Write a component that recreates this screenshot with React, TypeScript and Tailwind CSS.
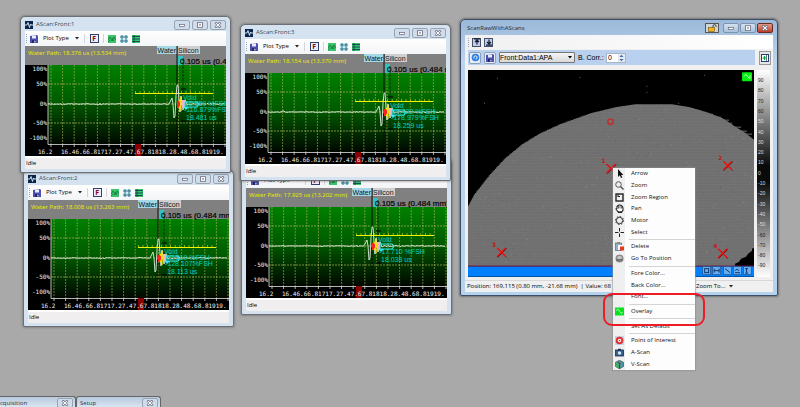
import React from "react";

const UI = "font-['Open_Sans','Noto_Sans',sans-serif]";

type Scan = {
  id: number;
  path: string;
  echo: number;
  lines: string[];
  place: string;
};

const scans: Scan[] = [
  { id: 4, path: "17.925 us (13.202 mm)", echo: 126, lines: ["Void", "", "-17.710 %FSH", "18.038 us"], place: "left-[241px] top-[158px] z-0" },
  { id: 2, path: "18.008 us (13.263 mm)", echo: 130, lines: ["Void", "52.519 %FSH", "-128.107%FSH", "18.113 us"], place: "left-[23px] top-[170px] z-0" },
  { id: 3, path: "18.154 us (13.370 mm)", echo: 139, lines: ["Void", "59.422 %FSH", "-178.979%FSH", "18.259 us"], place: "left-[240px] top-[24px] z-10" },
  { id: 1, path: "18.376 us (13.534 mm)", echo: 152, lines: ["Void", "52.859 %FSH", "-116.879%FSH", "18.481 us"], place: "left-[20px] top-[16px] z-10" },
];

function noise(seed: number) {
  let s = seed;
  return () => {
    s = (s * 16807) % 2147483647;
    return s / 2147483647;
  };
}

function CaptionButton({ kind, active }: { kind: "min" | "max" | "close"; active?: boolean }) {
  const red = active && kind === "close";
  return (
    <button
      aria-label={kind}
      className={`flex h-[10px] w-4 items-center justify-center rounded-[2px] border ${
        red ? "border-[#6b2a22] bg-linear-to-b from-[#e09a8c] to-[#c23a22]" : active ? "border-[#7e93ad] bg-linear-to-b from-[#d3e0ef] to-[#a9c2de]" : "border-[#9aa4b1] bg-[#cfdceb]"
      }`}
    >
      <svg width="8" height="6" viewBox="0 0 8 6" fill="none">
        {kind === "min" && <rect x="1.5" y="2.5" width="5" height="2" fill="#fff" stroke="#667" strokeWidth="0.7" />}
        {kind === "max" && (
          <>
            <rect x="1.5" y="0.7" width="5" height="4.6" fill="#fff" stroke="#667" strokeWidth="0.8" />
            <rect x="3.2" y="2.2" width="1.6" height="1.4" fill="#778" />
          </>
        )}
        {kind === "close" && (
          <>
            <path d="M1.5 .5 6.5 5.5M6.5 .5 1.5 5.5" stroke="#556" strokeWidth="2.4" />
            <path d="M1.8 .8 6.2 5.2M6.2 .8 1.8 5.2" stroke="#fff" strokeWidth="1.2" />
          </>
        )}
      </svg>
    </button>
  );
}

function Floppy() {
  return (
    <svg width="8" height="8" viewBox="0 0 8 8">
      <path d="M0 1 7 0 8 1V8H0Z" fill="#4a4fb0" />
      <rect x="2" y="0.5" width="4" height="3" fill="#e9ecfb" />
      <rect x="2" y="5" width="4" height="3" fill="#23266b" />
      <rect x="4.3" y="5.6" width="1.2" height="2" fill="#e9ecfb" />
    </svg>
  );
}

function Grip() {
  return <span className="h-[9px] w-px border-l border-dotted border-gray-400" />;
}

const gridX = Array.from({ length: 16 }, (_, i) => 26 + i * 11.6);

function trace(echo: number, seed: number) {
  const r = noise(seed * 7919);
  let d = "M23 58";
  for (let x = 24; x < echo - 7; x += 1) d += `L${x} ${(58 + (r() - 0.5) * (x % 37 < 3 ? 2.4 : 0.7)).toFixed(1)}`;
  d += `L${echo - 6} 54 L${echo - 5} 52 L${echo - 4} 58 L${echo - 3} 72 L${echo - 2} 70 L${echo - 1} 50 L${echo} 39 L${echo + 1} 39 L${echo + 2} 54 L${echo + 3} 66 L${echo + 4} 50 L${echo + 6} 64 L${echo + 8} 54 L${echo + 10} 59`;
  for (let x = echo + 12; x < 200; x += 1) d += `L${x} ${(58 + (r() - 0.5) * 1.2).toFixed(1)}`;
  return d;
}

function Plot({ scan }: { scan: Scan }) {
  const e = scan.echo;
  return (
    <svg viewBox="0 0 201 110" className="block h-[110px] w-full bg-black" fontFamily="'Liberation Sans', sans-serif">
      <defs>
        <linearGradient id={`field${scan.id}`} x1="0" y1="0" x2="0" y2="1">
          <stop offset="0" stopColor="#008000" />
          <stop offset="0.45" stopColor="#005c00" />
          <stop offset="1" stopColor="#000800" />
        </linearGradient>
      </defs>
      <rect width="201" height="19" fill="#808080" />
      <rect x="23" y="19" width="178" height="79" fill={`url(#field${scan.id})`} />
      {gridX.map((x) => (
        <line key={x} x1={x} x2={x} y1="19" y2="98" stroke="#b3b85c" strokeWidth="0.9" strokeDasharray="2 1" opacity="0.65" />
      ))}
      {[38, 58, 77].map((y) => (
        <line key={y} x1="23" x2="201" y1={y} y2={y} stroke="#b3b85c" strokeWidth="0.9" strokeDasharray="2 1" opacity="0.75" />
      ))}
      <path d="M23 19V98.5H201" fill="none" stroke="#c8c8c8" strokeWidth="0.9" />
      {gridX.map((x) => (
        <line key={x} x1={x} x2={x} y1="98" y2="101" stroke="#ddd" strokeWidth="0.8" />
      ))}
      <g fill="#f2f2f2" fontFamily="'DejaVu Sans Mono', monospace" fontSize="6" textAnchor="end">
        <text x="22" y="25">100%</text>
        <text x="22" y="40">50%</text>
        <text x="22" y="60">0%</text>
        <text x="22" y="79">-50%</text>
        <text x="22" y="94">-100%</text>
      </g>
      <rect x="110" y="98" width="6" height="12" fill="#8b0000" />
      <g fill="#f2f2f2" fontFamily="'DejaVu Sans Mono', monospace" fontSize="6">
        <text x="13" y="108">16.2</text>
        <text x="36" y="108">16.46.66.81717.27.47.67.81818.28.48.68.81919.</text>
      </g>
      <text x="3" y="9" fontSize="6" fontFamily="'Noto Sans', sans-serif" fill="#e6e600">Water Path: {scan.path}</text>
      <rect x={e - 20} y="0" width="20" height="8" fill="#a5d8e6" />
      <rect x={e + 1} y="0" width="22" height="8" fill="#cfcfcf" />
      <text x={e - 1} y="7" fontSize="7" fill="#111" textAnchor="end">Water</text>
      <text x={e + 1} y="7" fontSize="7" fill="#111">Silicon</text>
      <rect x={e + 1} y="10" width="5" height="9" fill="#2fc4c4" />
      <text x={e + 3} y="18" fontSize="8" fill="#000" stroke="#000" strokeWidth="0.2">0.105 us (0.484 mm)</text>
      <line x1={e} x2={e} y1="0" y2="50" stroke="#000" strokeWidth="0.9" />
      <line x1={e} x2={e} y1="60" y2="98" stroke="#000" strokeWidth="0.9" strokeDasharray="2 1.5" />
      <line x1={e + 6} x2={e + 6} y1="12" y2="76" stroke="#0a2a0a" strokeWidth="0.9" strokeDasharray="3 1" />
      <path d={`M${e + 4} 43h5M${e + 4} 75h5`} stroke="#000" strokeWidth="1" />
      <line x1="110" x2="188" y1="47.5" y2="47.5" stroke="#f4f400" strokeWidth="1.2" />
      <line x1="110" x2="188" y1="46" y2="46" stroke="#e0e000" strokeWidth="1.6" strokeDasharray="0.8 3.8" />
      <path d={trace(e, scan.id)} fill="none" stroke="#e4ece4" strokeWidth="0.9" />
      <rect x={e} y="55" width="3" height="7" fill="#ff2020" />
      <path d={`M${e + 4} 51v14M${e + 2} 54l3 4-3 4`} stroke="#ffe000" strokeWidth="1.3" fill="none" />
      <rect x={e + 5} y="54" width="3" height="8" fill="#f3b6c0" />
      <g fill="#00cfc4" fontSize="7">
        <text x={e + 6} y="54">{scan.lines[0]}</text>
        <text x={e + 8} y="60">{scan.lines[1]}</text>
        <text x={e + 7} y="66">{scan.lines[2]}</text>
        <text x={e + 9} y="74">{scan.lines[3]}</text>
      </g>
      <path d={`M${e + 8} 56h12l2 2-2 3h-12z`} fill="none" stroke="#35e8ef" strokeWidth="1.1" />
      <path d={`M${e + 6} 61l3 3 3-3z`} fill="#35e8ef" />
    </svg>
  );
}

function ToolIcon({ kind }: { kind: "wave" | "grid" | "rows" }) {
  return (
    <svg width="8" height="8" viewBox="0 0 8 8">
      {kind === "wave" && (
        <>
          <rect width="8" height="8" fill="#3cc46a" />
          <path d="M0 5l2-3 2 4 2-4 2 3M0 7l2-2M4 3l2 3" stroke="#0b6a34" fill="none" strokeWidth="0.7" />
        </>
      )}
      {kind === "grid" && (
        <>
          <rect width="8" height="8" fill="#c8f2f8" />
          <path d="M2 0V8M6 0V8M0 2H8M0 6H8" stroke="#16506a" strokeWidth="0.8" />
        </>
      )}
      {kind === "rows" && (
        <>
          <rect width="8" height="8" fill="#3cc46a" />
          <path d="M0 1.5H8M0 4H8M0 6.5H8M2 0V8" stroke="#0b4a54" strokeWidth="0.9" />
        </>
      )}
    </svg>
  );
}

function AScanWindow({ scan }: { scan: Scan }) {
  return (
    <section className={`absolute flex w-[211px] flex-col rounded-t-[5px] rounded-b-[2px] border border-[#6c7076] bg-[#d5e3f1] px-1 pb-[3px] shadow-[0_0_2px_1px_rgba(70,70,70,0.35)] ${scan.place}`}>
      <header className="flex h-[14px] items-center gap-[3px] pt-px">
        <svg width="8" height="8" viewBox="0 0 8 8">
          <rect width="8" height="8" fill="#0a2348" />
          <path d="M0 4H2L3 1.5 4.5 6.5 5.5 3 6 4H8" fill="none" stroke="#dff0ff" strokeWidth="0.9" />
        </svg>
        <h2 className="flex-1 text-[6px] leading-[9px] text-[#3c4650]">AScan:Front:{scan.id}</h2>
        <div className="flex gap-[2px]">
          <CaptionButton kind="min" />
          <CaptionButton kind="max" />
          <CaptionButton kind="close" />
        </div>
      </header>
      <div className="flex h-[15px] items-center bg-linear-to-b from-white to-[#f3f4f6] pl-px">
        <Grip />
        <button aria-label="Save" className="ml-[3px]"><Floppy /></button>
        <button className="ml-[5px] flex items-center gap-[6px] text-[6px] leading-[9px] text-black">
          Plot Type
          <svg width="4" height="3" viewBox="0 0 4 3"><path d="M0 0H4L2 2.5Z" fill="#222" /></svg>
        </button>
        <span className="mx-[5px] h-[9px] w-px bg-gray-300" />
        <button className="flex h-[9px] w-[9px] items-center justify-center border border-[#33406e] bg-[#eceff8] text-[7px] leading-[7px] font-bold text-[#8b0015]">F</button>
        <span className="mx-[4px] h-[9px] w-px bg-gray-300" />
        <div className="flex gap-[4px]">
          <button aria-label="Waveform"><ToolIcon kind="wave" /></button>
          <button aria-label="Grid"><ToolIcon kind="grid" /></button>
          <button aria-label="Rows"><ToolIcon kind="rows" /></button>
        </div>
      </div>
      <Plot scan={scan} />
      <footer className="flex h-[13px] items-center border-t-2 border-white bg-[#f0eeee] pl-px text-[6px] leading-[9px] text-black">Idle</footer>
    </section>
  );
}

const rnd = noise(4242);
const specks = Array.from({ length: 700 }, () => ({ x: rnd() * 287, y: rnd() * 196, v: rnd() }));
const edge = [
  [0, 136], [7, 123], [22, 104], [37, 88], [54, 74], [72, 63], [94, 53], [122, 43], [147, 37], [167, 34], [204, 34], [222, 37], [239, 42], [255, 48], [267, 56], [277, 62], [287, 70],
];

function stairs() {
  let d = "M0 196V136";
  for (let i = 1; i < edge.length; i++) {
    const [x0, y0] = edge[i - 1];
    const [x1, y1] = edge[i];
    const n = 12;
    for (let k = 1; k <= n; k++) {
      d += `H${(x0 + ((x1 - x0) * k) / n).toFixed(1)}V${(y0 + ((y1 - y0) * k) / n).toFixed(1)}`;
    }
  }
  return d + "V178l-2 1v2l-4 3-2 3-5 2-2 3-4 2v2H0Z";
}

const marks = [
  { n: 1, x: 143, y: 98 },
  { n: 2, x: 260, y: 95 },
  { n: 3, x: 33, y: 182 },
  { n: 4, x: 255, y: 183 },
];

function ScanImage() {
  return (
    <svg viewBox="0 0 287 207" className="block h-[207px] min-w-0 flex-1 bg-black">
      <defs>
        <clipPath id="wafer"><path d={stairs()} /></clipPath>
      </defs>
      <path d={stairs()} fill="#707070" />
      <g clipPath="url(#wafer)">
        {Array.from({ length: 66 }, (_, i) => (
          <rect key={i} x="0" y={i * 3} width="287" height="1" fill="#7b7b7b" opacity="0.4" />
        ))}
        {specks.map((s, i) => (
          <rect key={i} x={s.x} y={s.y} width="1" height="1" fill={s.v > 0.5 ? "#979797" : "#5c5c5c"} opacity={s.v > 0.97 ? 1 : 0.5} />
        ))}
      </g>
      <path d="M240 47h14M246 50h16M252 53h13M262 57h12M266 61h14M272 64h13M236 44h10" stroke="#6f6f6f" strokeWidth="1" />
      <path d="M29 8h1M112 7h1M16 33h1M179 16h1M237 5h1M179 22h1M211 33h1" stroke="#666" strokeWidth="1" />
      <path d="M0 196.5H287" stroke="#a02060" strokeWidth="1" />
      <rect x="0" y="197" width="287" height="10" fill="#0080ff" />
      <circle cx="143" cy="51.5" r="2.7" fill="none" stroke="#d42020" strokeWidth="1.2" />
      {marks.map((m) => (
        <g key={m.n}>
          <path d={`M${m.x - 4} ${m.y - 4}l9 9M${m.x + 5} ${m.y - 4}l-9 9`} stroke="#400" strokeWidth="1" transform="translate(0.6 0.6)" />
          <path d={`M${m.x - 4} ${m.y - 4}l9 9M${m.x + 5} ${m.y - 4}l-9 9`} stroke="#f01010" strokeWidth="1.3" />
          <text x={m.x - 9} y={m.y - 5} fontSize="6" fontWeight="bold" fill="#c01818" fontFamily="'DejaVu Sans', sans-serif">{m.n}</text>
        </g>
      ))}
      <rect x="275" y="2" width="10" height="9" rx="1" fill="#00f010" />
      <path d="M277 6l2-2 2 3 2 1v-3" fill="none" stroke="#d6ffd6" strokeWidth="0.9" />
      {[235, 245, 256, 266, 276].map((x) => (
        <rect key={x} x={x + 0.5} y="197" width="8" height="8" fill="#66aef0" stroke="#23528c" strokeWidth="0.7" />
      ))}
      <g stroke="#0c2c5c" strokeWidth="0.9" fill="none">
        <rect x="237.5" y="199" width="4" height="4" />
        <path d="M247 199v4M252 199v4M247 201h5M258 199l5 4M268 201q2-3 4 0M268 203h5M278 199h3M278 203.5h3M279.5 199v4" />
      </g>
    </svg>
  );
}

const levels = ["90", "80", "70", "60", "50", "40", "30", "20", "10", "0", "-10", "-20", "-30", "-40", "-50", "-60", "-70", "-80", "-90"];

function ScanWindow() {
  return (
    <section className="absolute top-[19px] left-[460px] flex w-[318px] flex-col rounded-t-[5px] rounded-b-[2px] border border-[#3d4f66] bg-linear-to-b from-[#9cb9da] via-[#bcd3ec] via-15% to-[#b5d3ef] px-1 pb-[3px] shadow-[0_0_2px_1px_rgba(50,50,50,0.45)]">
      <header className="flex h-[15px] items-center pt-px pl-[2px]">
        <h2 className="flex-1 text-[6px] leading-[9px] text-[#1c2733]">ScanRawWithAScans</h2>
        <button aria-label="Unlock" className="mr-[4px] flex h-[10px] w-[14px] items-center justify-center border border-[#555] bg-[#cdd5dd]">
          <svg width="9" height="8" viewBox="0 0 9 8">
            <rect x="0.5" y="3.5" width="6" height="4" fill="#f3b41c" stroke="#7b5600" strokeWidth="0.6" />
            <path d="M5 3.5V2Q5 .6 6.5 .6T8 2V3" fill="none" stroke="#444" strokeWidth="1" />
          </svg>
        </button>
        <div className="flex gap-px">
          <CaptionButton kind="min" active />
          <CaptionButton kind="max" active />
          <CaptionButton kind="close" active />
        </div>
      </header>
      <div className="flex flex-col bg-[#f0f0f0]">
        <div className="flex h-[14px] items-center gap-[3px] bg-linear-to-r from-[#f0f0f0] to-white pl-[3px]">
          <Grip />
          {["M4 6.5V2M2 4l2-2 2 2M1 .8H7", "M4 1.5V6M2 4l2 2 2-2M1 7.2H7"].map((d) => (
            <button key={d} aria-label="Layout" className="flex h-[9px] w-[9px] items-center justify-center border border-[#45506c] bg-[#c5cbe0]">
              <svg width="8" height="8" viewBox="0 0 8 8" className="shrink-0"><path d={d} fill="none" stroke="#111a33" strokeWidth="1.2" /></svg>
            </button>
          ))}
        </div>
        <div className="flex h-[17px] items-center gap-[4px] pr-[2px] pl-[3px]">
          <div className="flex h-[15px] flex-1 items-center gap-[3px] bg-[#b9d0ee] pl-px">
            <button aria-label="Refresh" className="flex h-[12px] w-[12px] items-center justify-center rounded-[2px] border border-[#8ca0bb] bg-[#e8eef7]">
              <svg width="9" height="9" viewBox="0 0 9 9"><circle cx="4.5" cy="4.5" r="3.8" fill="#2c7de0" /><path d="M2.8 5.5Q2.5 2.8 4.5 2.8L5.8 3.5M6.2 3.5Q6.5 6.2 4.5 6.2" fill="none" stroke="#fff" strokeWidth="0.9" /></svg>
            </button>
            <button aria-label="Save data" className="flex h-[12px] w-[12px] items-center justify-center rounded-[2px] border border-[#8ca0bb] bg-[#e8eef7]"><Floppy /></button>
            <div className="relative">
              <select aria-label="Data source" className="block h-[11px] w-[76px] appearance-none rounded-[1px] border border-[#777] bg-linear-to-b from-[#f4f4f4] to-[#dadada] font-['Liberation_Sans',sans-serif] text-[7px] leading-[9px] text-black">
                <option>Front:Data1:APA</option>
              </select>
              <svg className="pointer-events-none absolute top-[4px] right-[3px]" width="4" height="3" viewBox="0 0 4 3"><path d="M0 0H4L2 2.5Z" fill="#000" /></svg>
            </div>
            <label htmlFor="corr" className="w-[25px] font-['Liberation_Sans',sans-serif] text-[7px] leading-[9px] whitespace-nowrap text-black">B. Corr.:</label>
            <div className="flex h-[10px] border border-[#a8b6c8] bg-white">
              <input id="corr" type="text" defaultValue="0" className="w-[11px] pl-px font-['Liberation_Sans',sans-serif] text-[7px] leading-[8px] text-black" />
              <svg width="7" height="8" viewBox="0 0 7 8"><rect width="7" height="8" fill="#e4e8f0" /><path d="M1.5 3 3.5 .8 5.5 3ZM1.5 5 3.5 7.2 5.5 5Z" fill="#4468a8" /></svg>
            </div>
          </div>
          <button aria-label="Add panel" className="flex h-[14px] w-[12px] items-center justify-center border border-[#999] bg-[#e6e6e6]">
            <svg width="8" height="8" viewBox="0 0 8 8"><rect x="0.5" y="0.5" width="7" height="7" fill="#fff" stroke="#24406e" /><path d="M5.5 1V7" stroke="#24406e" strokeWidth="0.7" /><path d="M3.5 2V6M1.5 4H5.5" stroke="#0f9a34" strokeWidth="1.2" /></svg>
          </button>
        </div>
        <div className="mt-[4px] flex gap-[3px] pr-[3px] pl-[3px]">
          <ScanImage />
          <svg viewBox="0 0 13 207" className="h-[207px] w-[13px]" fontFamily="'Liberation Sans', sans-serif" fontSize="5">
            <defs>
              <linearGradient id="scale" x1="0" y1="0" x2="0" y2="1">
                <stop offset="0" stopColor="#fff" />
                <stop offset="0.46" stopColor="#0a0a0a" />
                <stop offset="0.54" stopColor="#0a0a0a" />
                <stop offset="1" stopColor="#fff" />
              </linearGradient>
            </defs>
            <rect width="13" height="207" fill="url(#scale)" />
            {levels.map((t, i) => (
              <text key={t} x="1" y={12 + i * 10.3} fill={i < 4 || i > 14 ? "#222" : "#ddd"}>{t}</text>
            ))}
          </svg>
        </div>
        <footer className="mt-[3px] flex h-[12px] items-center border-t border-[#d8d8d8] pl-[2px] text-[6px] leading-[9px] text-black">
          <span className="w-[146px] whitespace-pre">Position: 169,115 (0.80 mm, -21.68 mm)  | Value: 68</span>
          <button className="ml-auto flex w-[77px] items-center gap-[4px]">
            Zoom To...
            <svg width="4" height="3" viewBox="0 0 4 3"><path d="M0 0H4L2 2.5Z" fill="#222" /></svg>
          </button>
        </footer>
      </div>
    </section>
  );
}

const glyphs: Record<string, React.ReactNode> = {
  Arrow: <path d="M3 0V8L4.8 6.3 6 9 7.3 8.4 6.1 5.9H8.3Z" fill="#111" />,
  Zoom: <g fill="none" stroke="#555"><circle cx="3.5" cy="3.5" r="2.8" /><path d="M5.5 5.5 8.5 8.5" strokeWidth="1.5" /></g>,
  "Zoom Region": <g fill="none" stroke="#222"><rect x="1" y="1" width="7" height="7" strokeWidth="1.4" /><path d="M3 1V4M3 3.5H5" /></g>,
  Pan: <g><path d="M1 5 2 4.5V2.5L3 1.5 4 1 5 1 6.3 1.5 7.5 2.5 8 4V6L6.5 8.5H3.5Z" fill="#fff" stroke="#222" strokeWidth="1.1" /><path d="M3.5 2V4.5M5 1.5V4.5M6.5 2.5V4.5M3 7.5H7" stroke="#222" strokeWidth="0.7" /></g>,
  Motor: <g fill="none" stroke="#333"><circle cx="4.5" cy="4.5" r="3.2" /><circle cx="4.5" cy="4.5" r="4" strokeDasharray="1.5 1.6" /></g>,
  Select: <path d="M4.5 0V3.5M4.5 5.5V9M0 4.5H3.5M5.5 4.5H9" stroke="#222" strokeWidth="1" />,
  Delete: <g><rect x="0.5" y="1" width="6" height="7.5" fill="#8fb0cc" stroke="#4f6c86" strokeWidth="0.7" /><rect x="2" y="0" width="3" height="1.5" fill="#c08040" /><rect x="3" y="3" width="4" height="5" fill="#fff" /><rect x="5" y="4.5" width="4" height="4" fill="#e8381c" /></g>,
  "Go To Position": <g><circle cx="4.5" cy="4.5" r="4" fill="#8a8a8a" /><ellipse cx="4.5" cy="3.5" rx="2.5" ry="1.5" fill="#c8c8c8" /><path d="M1 6H8" stroke="#555" strokeWidth="0.8" /></g>,
  Overlay: <g><rect width="9" height="8" y="0.5" fill="#08e020" /><path d="M1 4l2-2 2 3 1.5 1.5 1-1.5" stroke="#b8ffb8" fill="none" strokeWidth="0.8" /></g>,
  "Point of Interest": <g><rect width="9" height="9" fill="#c4d4e8" /><circle cx="4.5" cy="4.5" r="2.8" fill="#fff" stroke="#e03030" strokeWidth="2" /><circle cx="4.5" cy="4.5" r="0.8" fill="#e03030" /></g>,
  "A-Scan": <g><rect x="0.5" y="2" width="8" height="6" fill="#38608e" stroke="#1c2c48" strokeWidth="0.8" /><rect x="3" y="0.8" width="3" height="1.5" fill="#1c2c48" /><circle cx="4.5" cy="5" r="1.7" fill="#d8e8f8" /></g>,
  "V-Scan": <g><path d="M4.5 .3 8.5 2.3V6.5L4.5 8.8.5 6.5V2.3Z" fill="#4a9aa8" stroke="#333" strokeWidth="0.6" /><path d="M.5 2.3 4.5 4.3V8.8L.5 6.5Z" fill="#3fae60" /><path d="M4.5 4.3V8.8M3 2.5l3 1.5" stroke="#702020" strokeWidth="0.9" /></g>,
};

const groups = [
  ["Arrow", "Zoom", "Zoom Region", "Pan", "Motor", "Select"],
  ["Delete", "Go To Position"],
  ["Fore Color...", "Back Color...", "Font..."],
  ["Overlay"],
  ["Set As Default"],
  ["Point of Interest", "A-Scan", "V-Scan"],
];

function ContextMenu() {
  return (
    <div role="menu" className="absolute top-[168px] left-[613px] z-20 flex h-[202px] w-[82px] flex-col bg-linear-to-r from-[#efefef] from-[12px] to-[#fdfdfd] to-[12px] shadow-[0_0_1px_1px_rgba(140,140,140,0.5)]">
      {groups.map((items, g) => (
        <React.Fragment key={items[0]}>
          {g > 0 && <div role="separator" className="my-px ml-[16px] h-px shrink-0 bg-[#d4d4d4]" />}
          {items.map((t) => (
            <button key={t} role="menuitem" className="flex min-h-0 flex-1 items-center gap-[7px] pl-[2px] text-left text-[6px] leading-[9px] whitespace-nowrap text-[#111]">
              <svg width="9" height="9" viewBox="0 0 9 9" className="shrink-0">{glyphs[t]}</svg>
              {t}
            </button>
          ))}
        </React.Fragment>
      ))}
    </div>
  );
}

function DockTab({ title, place }: { title: string; place: string }) {
  return (
    <section className={`flex h-[11px] items-start justify-between overflow-hidden rounded-t-[3px] border border-b-0 border-[#666] bg-linear-to-b from-[#b9cade] to-[#d8e5f2] pt-px pr-[2px] pl-[3px] ${place}`}>
      <h2 className="text-[6px] leading-[11px] whitespace-nowrap text-[#26303a]">{title}</h2>
      <CaptionButton kind="close" />
    </section>
  );
}

export default function App() {
  return (
    <main className={`relative flex min-h-screen flex-col justify-end overflow-hidden bg-[#a9a9a9] ${UI}`}>
      {scans.map((s) => (
        <AScanWindow key={s.id} scan={s} />
      ))}
      <ScanWindow />
      <ContextMenu />
      <div className="pointer-events-none absolute top-[293px] left-[603px] z-30 h-[33px] w-[102px] rounded-[9px] border-2 border-[#ee1c25]" />
      <div className="flex">
        <DockTab title="cquisition" place="-ml-[4px] w-[80px]" />
        <DockTab title="Setup" place="w-[85px]" />
      </div>
    </main>
  );
}
